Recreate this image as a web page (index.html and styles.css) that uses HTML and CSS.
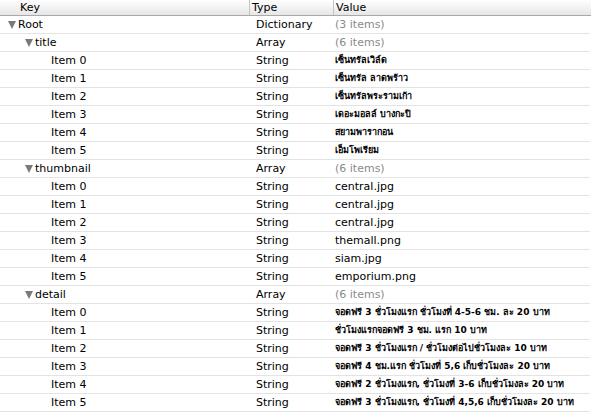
FILE: index.html
```html
<!DOCTYPE html>
<html>
<head>
<meta charset="utf-8">
<link rel="stylesheet" href="styles.css">
</head>
<body>
<div class="outline">
  <div class="head">
    <div class="hcell hkey">Key</div>
    <div class="hcell htype">Type</div>
    <div class="hcell hval">Value</div>
  </div>
  <div class="row"><div class="key l0"><span class="tri"></span>Root</div><div class="type">Dictionary</div><div class="val dim">(3 items)</div></div>
  <div class="row"><div class="key l1"><span class="tri"></span>title</div><div class="type">Array</div><div class="val dim">(6 items)</div></div>
  <div class="row"><div class="key l2">Item 0</div><div class="type">String</div><div class="val thai">เซ็นทรัลเวิล์ด</div></div>
  <div class="row"><div class="key l2">Item 1</div><div class="type">String</div><div class="val thai">เซ็นทรัล ลาดพร้าว</div></div>
  <div class="row"><div class="key l2">Item 2</div><div class="type">String</div><div class="val thai">เซ็นทรัลพระรามเก้า</div></div>
  <div class="row"><div class="key l2">Item 3</div><div class="type">String</div><div class="val thai">เดอะมอลล์ บางกะปิ</div></div>
  <div class="row"><div class="key l2">Item 4</div><div class="type">String</div><div class="val thai">สยามพารากอน</div></div>
  <div class="row"><div class="key l2">Item 5</div><div class="type">String</div><div class="val thai">เอ็มโพเรียม</div></div>
  <div class="row"><div class="key l1"><span class="tri"></span>thumbnail</div><div class="type">Array</div><div class="val dim">(6 items)</div></div>
  <div class="row"><div class="key l2">Item 0</div><div class="type">String</div><div class="val">central.jpg</div></div>
  <div class="row"><div class="key l2">Item 1</div><div class="type">String</div><div class="val">central.jpg</div></div>
  <div class="row"><div class="key l2">Item 2</div><div class="type">String</div><div class="val">central.jpg</div></div>
  <div class="row"><div class="key l2">Item 3</div><div class="type">String</div><div class="val">themall.png</div></div>
  <div class="row"><div class="key l2">Item 4</div><div class="type">String</div><div class="val">siam.jpg</div></div>
  <div class="row"><div class="key l2">Item 5</div><div class="type">String</div><div class="val">emporium.png</div></div>
  <div class="row"><div class="key l1"><span class="tri"></span>detail</div><div class="type">Array</div><div class="val dim">(6 items)</div></div>
  <div class="row"><div class="key l2">Item 0</div><div class="type">String</div><div class="val thai">จอดฟรี 3 ชั่วโมงแรก ชั่วโมงที่ 4-5-6 ชม. ละ 20 บาท</div></div>
  <div class="row"><div class="key l2">Item 1</div><div class="type">String</div><div class="val thai">ชั่วโมงแรกจอดฟรี 3 ชม. แรก 10 บาท</div></div>
  <div class="row"><div class="key l2">Item 2</div><div class="type">String</div><div class="val thai">จอดฟรี 3 ชั่วโมงแรก / ชั่วโมงต่อไปชั่วโมงละ 10 บาท</div></div>
  <div class="row"><div class="key l2">Item 3</div><div class="type">String</div><div class="val thai">จอดฟรี 4 ชม.แรก ชั่วโมงที่ 5,6 เก็บชั่วโมงละ 20 บาท</div></div>
  <div class="row"><div class="key l2">Item 4</div><div class="type">String</div><div class="val thai">จอดฟรี 2 ชั่วโมงแรก, ชั่วโมงที่ 3-6 เก็บชั่วโมงละ 20 บาท</div></div>
  <div class="row"><div class="key l2">Item 5</div><div class="type">String</div><div class="val thai">จอดฟรี 3 ชั่วโมงแรก, ชั่วโมงที่ 4,5,6 เก็บชั่วโมงละ 20 บาท</div></div>
</div>
</body>
</html>
```
FILE: styles.css
```css
html, body {
  margin: 0;
  padding: 0;
  background: #ffffff;
}
body {
  font-family: "DejaVu Sans", "Liberation Sans", sans-serif;
  font-size: 11px;
  color: #000;
}
.outline {
  width: 591px;
}
.head {
  display: grid;
  grid-template-columns: 249px 84px 1fr;
  height: 15px;
  background: linear-gradient(#ffffff, #e6e6e6);
  border-bottom: 1px solid #a9a9a9;
}
.hcell {
  line-height: 15px;
  white-space: nowrap;
}
.hkey {
  padding-left: 20px;
}
.htype {
  border-left: 1px solid #c4c4c4;
  padding-left: 2px;
}
.hval {
  border-left: 1px solid #c4c4c4;
  padding-left: 2px;
}
.row {
  display: grid;
  grid-template-columns: 249px 84px 1fr;
  height: 17px;
  border-bottom: 1px solid #e3e3e3;
  margin-right: 1px;
}
.row > div {
  line-height: 17px;
  white-space: nowrap;
  overflow: hidden;
}
.key {
  display: flex;
  align-items: center;
}
.l0 { padding-left: 8px; }
.l1 { padding-left: 25px; }
.l2 { padding-left: 51px; }
.tri {
  width: 0;
  height: 0;
  border-left: 4.5px solid transparent;
  border-right: 4.5px solid transparent;
  border-top: 8px solid #7a7a7a;
  margin-right: 2px;
}
.type {
  padding-left: 7px;
}
.val {
  padding-left: 2px;
}
.dim {
  color: #8a8a8a;
}
.thai {
  font-size: 9px;
  font-weight: bold;
}
```
